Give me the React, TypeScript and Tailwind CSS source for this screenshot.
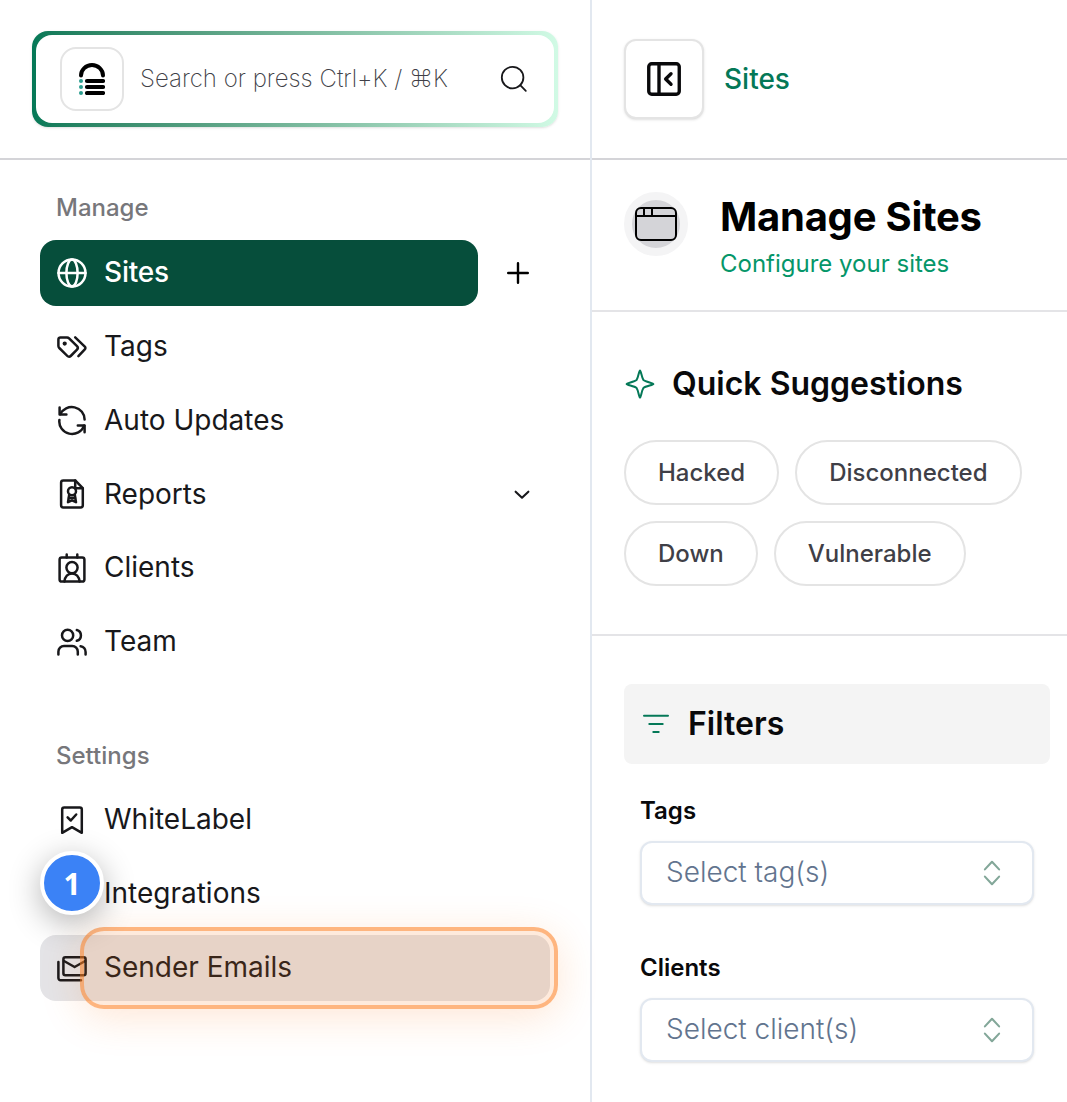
import type { ReactNode } from "react";

type NavItem = {
  label: string;
  icon: ReactNode;
  active?: boolean;
  hovered?: boolean;
  expandable?: boolean;
};

function Icon({
  children,
  className = "size-8",
  strokeWidth = 2.5,
}: {
  children: ReactNode;
  className?: string;
  strokeWidth?: number;
}) {
  return (
    <svg
      viewBox="0 0 32 32"
      fill="none"
      stroke="currentColor"
      strokeWidth={strokeWidth}
      strokeLinecap="round"
      strokeLinejoin="round"
      className={`shrink-0 ${className}`}
    >
      {children}
    </svg>
  );
}

const manageItems: NavItem[] = [
  {
    label: "Sites",
    active: true,
    icon: (
      <>
        <circle cx="16" cy="16" r="13.5" />
        <ellipse cx="16" cy="16" rx="5.6" ry="13.5" />
        <path d="M2.5 16h27" />
      </>
    ),
  },
  {
    label: "Tags",
    icon: (
      <>
        <path d="M4.4 6.4H11a3 3 0 0 1 2.1.9l7.9 7.9a2.5 2.5 0 0 1 0 3.5L14.7 25a2.3 2.3 0 0 1-3.3 0l-8.1-8A3 3 0 0 1 2.4 15V8.4a2 2 0 0 1 2-2Z" />
        <path d="m19.2 6.4 9.6 9.2a1.9 1.9 0 0 1 0 2.8l-6.4 6.8" />
        <circle cx="8.7" cy="12.6" r="0.9" fill="currentColor" />
      </>
    ),
  },
  {
    label: "Auto Updates",
    icon: (
      <>
        <path d="M3.6 3.6v6.8h6.8" />
        <path d="M4.2 10.2A12.8 12.4 0 0 1 28.6 15.6" />
        <path d="M28.6 28.3v-6.8h-6.8" />
        <path d="M28.2 21.6A12.8 12.4 0 0 1 3.4 16" />
      </>
    ),
  },
  {
    label: "Reports",
    expandable: true,
    icon: (
      <>
        <path d="M7.3 2.4h11.9l7.6 7.8v17a2.2 2.2 0 0 1-2.2 2.2H7.3a2.2 2.2 0 0 1-2.2-2.2V4.6a2.2 2.2 0 0 1 2.2-2.2Z" />
        <path d="M19.2 2.6v7.6h7.4" />
        <circle cx="16" cy="13.3" r="4" />
        <path d="m13.2 16.8-1.2 7.4 4-1.9 4 1.9-1.2-7.4" />
        <path d="M13 20h6" />
      </>
    ),
  },
  {
    label: "Clients",
    icon: (
      <>
        <rect x="3.6" y="5.4" width="24.8" height="24.2" rx="2.2" />
        <path d="M10.7 2.4v3.2M21.3 2.4v3.2" />
        <circle cx="16" cy="15.6" r="5.6" />
        <path d="M8.4 29.5c.6-4.8 3.5-8.1 7.6-8.1s7 3.3 7.6 8.1" />
      </>
    ),
  },
  {
    label: "Team",
    icon: (
      <>
        <circle cx="11.6" cy="9.4" r="5.6" />
        <path d="M20.8 4a5.6 5.6 0 0 1 0 10.8" />
        <path d="M2.4 28.6v-2.9a5.6 5.6 0 0 1 5.6-5.6h8.2a5.6 5.6 0 0 1 5.6 5.6v2.9" />
        <path d="M24.6 20.2a5.8 5.8 0 0 1 5 5.7v2.7" />
      </>
    ),
  },
];

const settingsItems: NavItem[] = [
  {
    label: "WhiteLabel",
    icon: (
      <>
        <path d="M8.2 3.4h15.6a2 2 0 0 1 2 2v23.4L16 23.2l-9.8 5.6V5.4a2 2 0 0 1 2-2Z" />
        <path d="m11.6 13.3 3.2 3.2 5.4-6" />
      </>
    ),
  },
  {
    label: "Integrations",
    icon: (
      <>
        <rect x="5" y="5" width="9" height="9" rx="1.5" />
        <rect x="18" y="5" width="9" height="9" rx="1.5" />
        <rect x="5" y="18" width="9" height="9" rx="1.5" />
        <rect x="18" y="18" width="9" height="9" rx="1.5" />
      </>
    ),
  },
  {
    label: "Sender Emails",
    hovered: true,
    icon: (
      <>
        <rect x="7.4" y="5.2" width="22.2" height="18" rx="2" />
        <path d="m8 9 10.6 6 10.6-6" />
        <path d="M2.4 10v16a2.2 2.2 0 0 0 2.2 2.2H25" />
      </>
    ),
  },
];

const suggestions = ["Hacked", "Disconnected", "Down", "Vulnerable"];

function NavRow({ item }: { item: NavItem }) {
  return (
    <div className="flex items-center">
      <div
        className={`flex h-[65.8px] items-center gap-4 rounded-2xl pl-4 pr-4 text-[28px] ${
          item.active
            ? "w-[438px] bg-[#064e3b] font-medium tracking-[-0.2px] text-white"
            : "w-[510px] text-zinc-900"
        } ${item.hovered ? "bg-zinc-200" : ""}`}
      >
        <Icon>{item.icon}</Icon>
        <span className={item.active ? "pb-0.5" : "pb-[1.2px]"}>{item.label}</span>
        {item.expandable && (
          <Icon className="ml-auto size-6" strokeWidth={2.8}>
            <path d="m7.5 12.9 8.5 8 8.5-8" />
          </Icon>
        )}
      </div>
      {item.active && (
        <Icon className="ml-6 size-8" strokeWidth={2.4}>
          <path d="M16 6.2v19.6M6.2 16h19.6" />
        </Icon>
      )}
    </div>
  );
}

function NavSection({ title, items }: { title: string; items: NavItem[] }) {
  return (
    <div>
      <h3 className="h-[31.6px] pl-4 text-2xl font-medium text-[#77777b]">{title}</h3>
      <div className="mt-4 flex flex-col gap-2">
        {items.map((item) => (
          <NavRow key={item.label} item={item} />
        ))}
      </div>
    </div>
  );
}

function SearchBar() {
  return (
    <div className="h-24 w-[526px] rounded-2xl bg-linear-to-r from-[#047857] to-[#d1fae5] p-1 shadow-sm">
      <div className="flex h-full items-center rounded-2xl bg-white pl-6 pr-6">
        <div className="flex size-16 items-center justify-center rounded-2xl border-2 border-[#e4e4e4]">
          <svg viewBox="0 0 26 32" className="h-8 w-[26px]">
            <path
              d="M2 12.5a11 10.4 0 0 1 22 0"
              fill="none"
              stroke="#000"
              strokeWidth="4"
              strokeLinecap="round"
            />
            <path
              d="M8 18h16M8 24h16M8 30h16"
              stroke="#000"
              strokeWidth="4.2"
              strokeLinecap="round"
            />
            <g fill="#2a9d8f">
              <circle cx="2" cy="18" r="2" />
              <circle cx="2" cy="24" r="2" />
              <circle cx="2" cy="30" r="2" />
            </g>
          </svg>
        </div>
        <span className="ml-4 text-2xl font-extralight text-zinc-700">
          Search or press Ctrl+K / ⌘K
        </span>
        <Icon className="ml-auto size-8 text-zinc-900" strokeWidth={1.8}>
          <circle cx="14.6" cy="14.6" r="10.8" />
          <path d="m22.2 22.2 5.6 5.6" />
        </Icon>
      </div>
    </div>
  );
}

function SelectField({ label, placeholder }: { label: string; placeholder: string }) {
  return (
    <div>
      <label className="block h-8 text-2xl font-semibold text-zinc-950">{label}</label>
      <div className="mt-[14px] flex h-16 items-center justify-between rounded-xl border-2 border-slate-200 bg-white pl-6 pr-6 shadow-sm">
        <span className="pb-0.5 text-[28px] font-light text-slate-500">{placeholder}</span>
        <Icon className="size-8 text-[#83a799]" strokeWidth={2.1}>
          <path d="m8.9 12.4 7.1-7.6 7.1 7.6M8.9 19.6l7.1 7.6 7.1-7.6" />
        </Icon>
      </div>
    </div>
  );
}

function Sidebar() {
  return (
    <aside className="relative w-[592px] shrink-0 border-r-2 border-slate-200">
      <div className="flex h-40 border-b-2 border-zinc-300 pl-8 pt-[31px]">
        <SearchBar />
      </div>
      <nav className="flex flex-col gap-[64.8px] pl-10 pt-[32.4px]">
        <NavSection title="Manage" items={manageItems} />
        <NavSection title="Settings" items={settingsItems} />
      </nav>

      {/* Tour highlight and step number */}
      <div className="absolute left-20 top-[927px] h-[82px] w-[478px] rounded-3xl border-4 border-[#ff8124]/50 bg-[#f97316]/15 shadow-[0_8px_40px_rgba(249,115,22,0.18)]" />
      <div className="absolute left-10 top-[851px] flex size-16 items-center justify-center rounded-full border-4 border-white bg-[#3b82f6] font-['Open_Sans',sans-serif] text-[30px] font-bold text-white shadow-[0_8px_32px_rgba(0,0,0,0.3)]">
        1
      </div>
    </aside>
  );
}

function Content() {
  return (
    <main className="min-w-0 flex-1">
      <header className="flex h-40 items-center border-b-2 border-zinc-300 pl-8">
        <button className="flex size-20 items-center justify-center rounded-xl border-2 border-[#e4e4e4] bg-white shadow-sm">
          <Icon className="size-10 text-zinc-950" strokeWidth={2.7}>
            <rect x="3.8" y="3.8" width="24.4" height="24.4" rx="2.4" />
            <path d="M12 3.8v24.4M21.6 11.8 17.3 16l4.3 4.2" />
          </Icon>
        </button>
        <span className="ml-5 text-[28px] font-medium text-[#047857]">Sites</span>
      </header>

      <section className="flex h-[152px] border-b-2 border-[#e4e4e7] pl-8 pt-8">
        <div className="flex size-16 items-center justify-center rounded-full border-8 border-zinc-100 bg-zinc-300">
          <svg
            viewBox="0 0 42 34"
            fill="none"
            stroke="#000"
            strokeWidth="2"
            className="h-[34px] w-[42px] shrink-0"
          >
            <rect x="1" y="1" width="40" height="32" rx="5" />
            <path d="M1 9h40M9 1v8M17 1v8" />
          </svg>
        </div>
        <div className="ml-8">
          <h1 className="pt-px text-[40px] font-bold leading-[48px] tracking-[-0.25px] text-black">
            Manage Sites
          </h1>
          <p className="mt-[7px] text-2xl text-[#059669]">Configure your sites</p>
        </div>
      </section>

      <section className="h-[324px] border-b-2 border-[#e4e4e7] pl-8 pt-12">
        <h2 className="flex h-12 items-center gap-4 text-[32px] font-semibold text-zinc-950">
          <Icon className="size-8 text-[#047857]" strokeWidth={2}>
            <path d="M16 2.4c.9 0 1.6 6.9 3.4 9.6 2.4 2 10 2.9 10 4s-7.6 2-10 4c-1.8 2.7-2.5 9.6-3.4 9.6s-1.6-6.9-3.4-9.6c-2.4-2-10-2.9-10-4s7.6-2 10-4C14.4 9.3 15.1 2.4 16 2.4Z" />
          </Icon>
          Quick Suggestions
        </h2>
        <div className="mt-8 flex flex-wrap gap-4">
          {suggestions.map((s) => (
            <button
              key={s}
              className="h-[65px] rounded-full border-2 border-[#e4e4e4] px-8 text-2xl font-medium text-zinc-700"
            >
              {s}
            </button>
          ))}
        </div>
      </section>

      <section className="w-[458px] pl-8 pt-12">
        <h2 className="flex h-20 items-center gap-4 rounded-lg bg-[#f4f4f4] pl-4 text-[32px] font-semibold text-zinc-950">
          <Icon className="size-8 text-[#047857]" strokeWidth={2}>
            <path d="M4 7.8h24M9.3 16h13.4M13.3 24h5.4" />
          </Icon>
          Filters
        </h2>
        <div className="mt-[31px] flex flex-col gap-[47px] px-4">
          <SelectField label="Tags" placeholder="Select tag(s)" />
          <SelectField label="Clients" placeholder="Select client(s)" />
        </div>
      </section>
    </main>
  );
}

export default function App() {
  return (
    <div className="flex h-[1102px] w-[1067px] overflow-hidden bg-white font-[Inter,sans-serif]">
      <Sidebar />
      <Content />
    </div>
  );
}
